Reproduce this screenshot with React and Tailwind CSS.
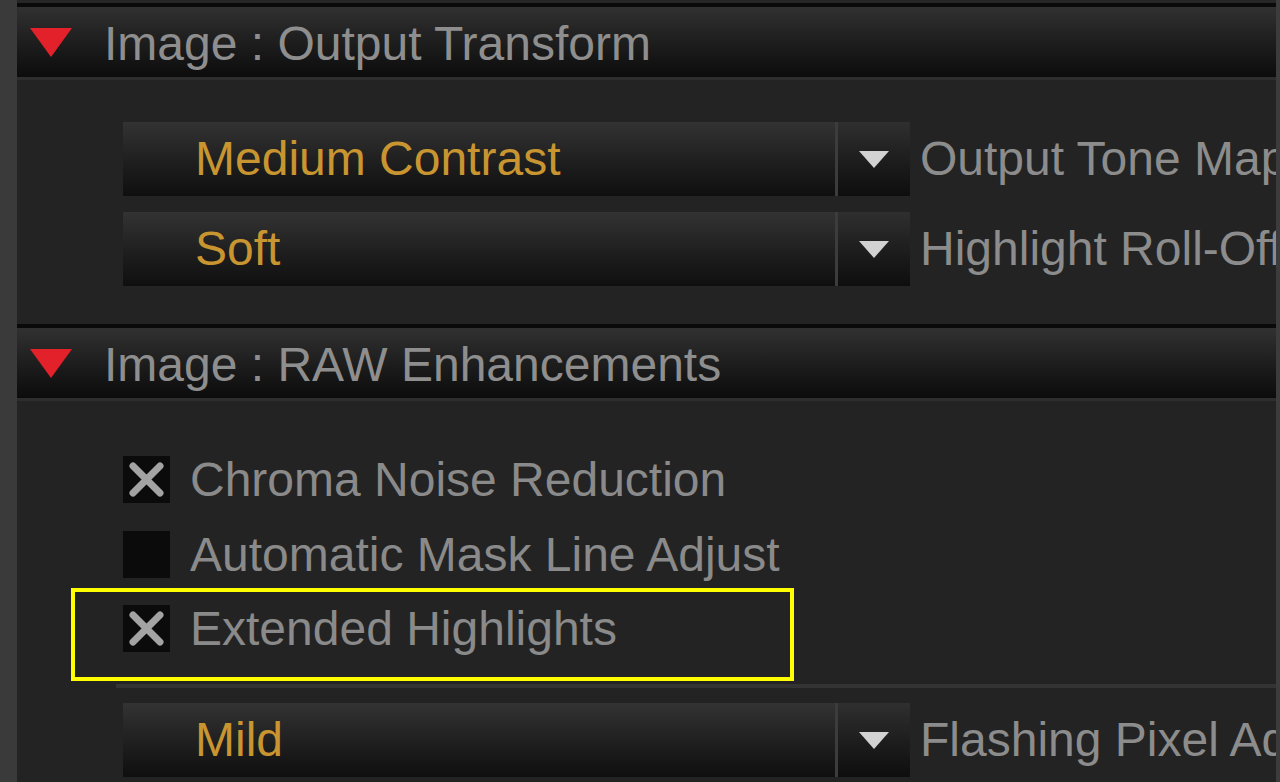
import React from 'react';

// Zoomed view of a RAW decode settings panel.
function SectionHeader({ title }) {
  return (
    <div className="flex flex-col">
      <div className="h-[4px] bg-[#0a0a0a]" />
      <div className="flex h-[70px] items-center bg-gradient-to-b from-[#313131] to-[#0c0c0c]">
        <svg width="42" height="29" viewBox="0 0 42 29" className="ml-[13px] shrink-0">
          <polygon points="0,0 42,0 21,29" fill="#e3212b" />
        </svg>
        <span className="ml-[32px] pt-[3px] text-[48px] leading-none text-[#8e8e8e]">{title}</span>
      </div>
      <div className="h-[3px] bg-[#2e2e2e]" />
    </div>
  );
}

function Dropdown({ value, label }) {
  return (
    <div className="flex items-center">
      <div className="flex h-[74px] w-[712px] shrink-0 items-center bg-gradient-to-b from-[#333333] to-[#0f0f0f]">
        <span className="ml-[72px] text-[48px] leading-none text-[#c89530]">{value}</span>
      </div>
      <div className="h-[74px] w-[3px] shrink-0 bg-[#3c3c3c]" />
      <div className="flex h-[74px] w-[72px] shrink-0 items-center justify-center bg-gradient-to-b from-[#2f2f2f] to-[#0e0e0e]">
        <svg width="30" height="17" viewBox="0 0 30 17">
          <polygon points="0,0 30,0 15,17" fill="#d2d2d2" />
        </svg>
      </div>
      <span className="ml-[10px] whitespace-nowrap text-[48px] leading-none text-[#8c8c8c]">{label}</span>
    </div>
  );
}

function Checkbox({ checked, label }) {
  return (
    <div className="flex h-[47px] items-center">
      <div className="flex h-[47px] w-[47px] shrink-0 items-center justify-center bg-[#0b0b0b]">
        {checked && (
          <svg width="39" height="39" viewBox="0 0 39 39">
            <path d="M6 6 L33 33 M33 6 L6 33" stroke="#a3a3a3" strokeWidth="7" strokeLinecap="round" />
          </svg>
        )}
      </div>
      <span className="ml-[20px] whitespace-nowrap text-[48px] leading-none text-[#8a8a8a]">{label}</span>
    </div>
  );
}

export default function App() {
  return (
    <div
      className="flex h-[782px] w-[1280px] overflow-hidden bg-[#232323]"
      style={{ fontFamily: '"Liberation Sans", Arial, sans-serif' }}
    >
      <div className="w-[17px] shrink-0 bg-[#3a3a3a]" />
      <div className="flex min-w-0 flex-1 flex-col overflow-hidden">
        <div className="h-[3px] bg-[#262626]" />
        <SectionHeader title="Image : Output Transform" />

        <div className="flex flex-col gap-[16px] pl-[106px] pt-[42px] pb-[38px]">
          <Dropdown value="Medium Contrast" label="Output Tone Map" />
          <Dropdown value="Soft" label="Highlight Roll-Off" />
        </div>

        <SectionHeader title="Image : RAW Enhancements" />

        <div className="flex flex-col pt-[55px]">
          <div className="flex flex-col gap-[28px] pl-[106px]">
            <Checkbox checked label="Chroma Noise Reduction" />
            <Checkbox label="Automatic Mask Line Adjust" />
          </div>
          <div className="mt-[10px] ml-[54px] w-[723px] border-[4px] border-[#ffff00] pt-[13px] pb-[25px] pl-[48px]">
            <Checkbox checked label="Extended Highlights" />
          </div>
          <div className="mt-[3px] ml-[99px] h-[4px] bg-[#333333]" />
          <div className="pl-[106px] pt-[15px]">
            <Dropdown value="Mild" label="Flashing Pixel Adjust" />
          </div>
        </div>
      </div>
      <div className="w-[4px] shrink-0 bg-[#3c3c3c]" />
    </div>
  );
}
